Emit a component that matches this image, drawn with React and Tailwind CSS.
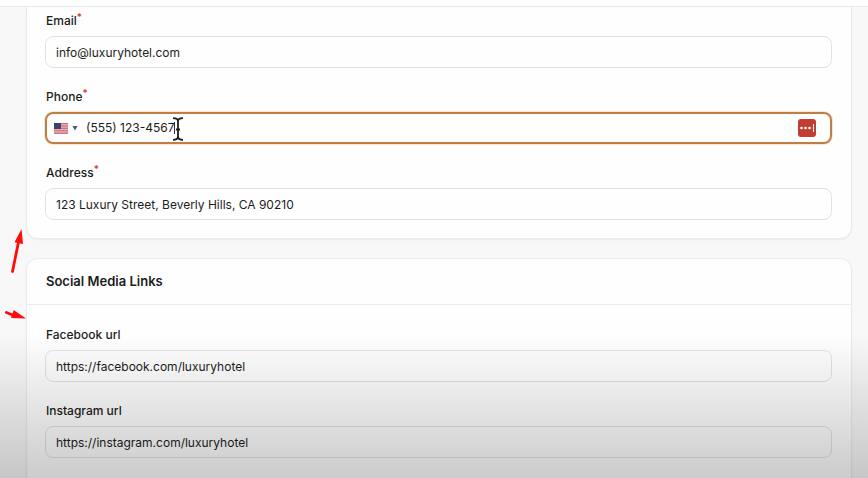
import React from 'react'

const inputClass =
  'block h-8 w-full rounded-lg border border-[#e2e2e2] bg-transparent px-2.5 text-xs text-[#1c1c1c] outline-none'

function Label({ id, children, required }) {
  return (
    <label htmlFor={id} className="flex h-5 items-center px-px text-xs font-medium text-[#1c1c1c]">
      {children}
      {required && <span className="-mt-2 text-[10px] leading-none text-[#d92d20]">*</span>}
    </label>
  )
}

function Field({ id, label, value, required }) {
  return (
    <div className="flex flex-col gap-[5px]">
      <Label id={id} required={required}>{label}</Label>
      <input id={id} type="text" defaultValue={value} className={inputClass} />
    </div>
  )
}

function UsFlag() {
  return (
    <svg width="14" height="11" viewBox="0 0 14 11" aria-hidden="true">
      <rect width="14" height="11" fill="#ecc9cd" />
      <path d="M0 .5h14M0 2.2h14M0 3.9h14M0 5.6h14M0 7.3h14M0 9h14M0 10.6h14" stroke="#c9636c" strokeWidth=".9" />
      <rect width="7" height="6" fill="#3d4270" />
    </svg>
  )
}

function PhoneField() {
  return (
    <div className="flex flex-col gap-[5px]">
      <Label id="phone" required>Phone</Label>
      <div className="relative flex h-8 items-center rounded-lg border-2 border-[#bd7e47] pl-[7px] pr-3.5 ring-1 ring-[#f7e6cf]">
        <button type="button" aria-label="Country" className="flex shrink-0 items-center gap-1">
          <UsFlag />
          <svg width="6" height="5" viewBox="0 0 6 5" aria-hidden="true">
            <path d="M.5 0h5L3 4.500z" fill="#555" />
          </svg>
        </button>
        <input
          id="phone"
          type="tel"
          defaultValue="(555) 123-4567"
          className="min-w-0 flex-1 bg-transparent pl-2 text-xs text-[#1c1c1c] outline-none"
        />
        <button type="button" aria-label="Password manager" className="shrink-0">
          <svg width="18" height="18" viewBox="0 0 18 18" aria-hidden="true">
            <rect width="18" height="18" rx="3" fill="#c43d35" />
            <g fill="#fff">
              <circle cx="3.500" cy="9" r="1.300" />
              <circle cx="7.500" cy="9" r="1.300" />
              <circle cx="11.500" cy="9" r="1.300" />
            </g>
            <path d="M15.500 5v8" stroke="#fff" strokeWidth="1" />
          </svg>
        </button>

        {/* Text caret and mouse pointer */}
        <span className="absolute left-[127px] top-2 h-3 w-px bg-[#333]" />
        <svg className="absolute left-[124px] top-0.5" width="14" height="26" viewBox="0 0 14 26" fill="none" aria-hidden="true">
          <path d="M2 2.200c3 0 5 .8 5 3.300v15c0 2.500-2 3.300-5 3.300M12 2.200c-3 0-5 .8-5 3.300M12 23.800c-3 0-5-.8-5-3.300M5 13.500h4" stroke="#1c1c1c" strokeWidth="1.800" />
        </svg>
      </div>
    </div>
  )
}

function Arrows() {
  return (
    <svg className="pointer-events-none absolute left-0 top-[220px]" width="30" height="110" viewBox="0 0 30 110" aria-hidden="true">
      <g stroke="#ff0b0b" strokeWidth="2.800" strokeLinecap="round">
        <path d="M12.500 51.500 18.300 23" />
        <path d="M6.300 92.500 14 95.500" />
      </g>
      <path d="M21.500 9 23 24 14.500 22.200zM26 98.500 11 98 13.700 90z" fill="#ff0b0b" />
    </svg>
  )
}

export default function App() {
  return (
    <div className="relative h-screen overflow-hidden bg-[#f8f8f8] font-['Inter',sans-serif]">
      <header className="h-[7px] border-b border-[#e9e9e9] bg-white" />

      <main className="flex flex-col gap-[19px] pl-[26px] pr-4">
        <section className="flex flex-col gap-[19px] rounded-b-xl border border-t-0 border-[#ebebeb] bg-[#fefefe] pb-[18px] pl-[18px] pr-[19px] pt-1 shadow-xs">
          <Field id="email" label="Email" value="info@luxuryhotel.com" required />
          <PhoneField />
          <Field id="address" label="Address" value="123 Luxury Street, Beverly Hills, CA 90210" required />
        </section>

        <section className="rounded-xl border border-[#ebebeb] bg-[#fefefe] shadow-xs">
          <h2 className="flex h-[46px] items-center border-b border-[#ebebeb] px-[19px] text-[13px] font-semibold text-[#1c1c1c]">
            Social Media Links
          </h2>
          <div className="flex flex-col gap-[19px] pb-10 pl-[18px] pr-[19px] pt-5">
            <Field id="facebook" label="Facebook url" value="https://facebook.com/luxuryhotel" />
            <Field id="instagram" label="Instagram url" value="https://instagram.com/luxuryhotel" />
          </div>
        </section>
      </main>

      {/* Bottom fade */}
      <div className="pointer-events-none absolute inset-x-0 bottom-0 h-36 bg-linear-to-b from-black/0 to-black/20" />
      <Arrows />
    </div>
  )
}
